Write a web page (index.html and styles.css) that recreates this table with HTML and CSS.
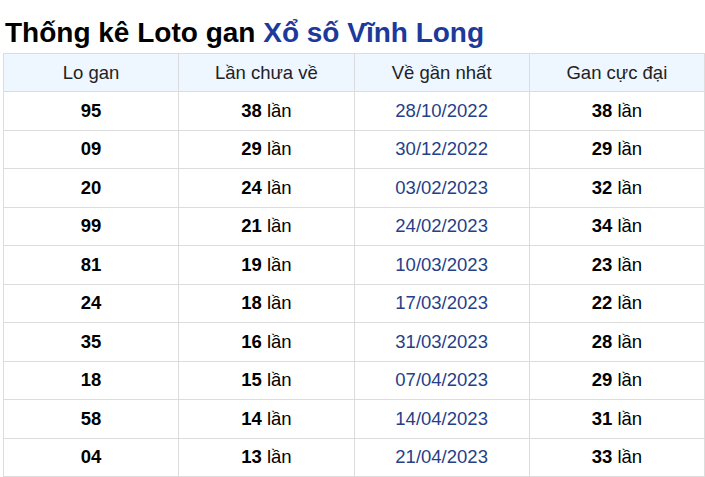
FILE: index.html
```html
<!DOCTYPE html>
<html lang="vi">
<head>
<meta charset="utf-8">
<link rel="stylesheet" href="styles.css">
</head>
<body>
<div class="wrap">
  <h2 class="title">Thống kê Loto gan <span class="hl">Xổ số Vĩnh Long</span></h2>
  <table class="gan">
    <thead>
      <tr><th>Lo gan</th><th>Lần chưa về</th><th>Về gần nhất</th><th>Gan cực đại</th></tr>
    </thead>
    <tbody>
      <tr><td><b>95</b></td><td><b>38</b> lần</td><td class="date">28/10/2022</td><td><b>38</b> lần</td></tr>
      <tr><td><b>09</b></td><td><b>29</b> lần</td><td class="date">30/12/2022</td><td><b>29</b> lần</td></tr>
      <tr><td><b>20</b></td><td><b>24</b> lần</td><td class="date">03/02/2023</td><td><b>32</b> lần</td></tr>
      <tr><td><b>99</b></td><td><b>21</b> lần</td><td class="date">24/02/2023</td><td><b>34</b> lần</td></tr>
      <tr><td><b>81</b></td><td><b>19</b> lần</td><td class="date">10/03/2023</td><td><b>23</b> lần</td></tr>
      <tr><td><b>24</b></td><td><b>18</b> lần</td><td class="date">17/03/2023</td><td><b>22</b> lần</td></tr>
      <tr><td><b>35</b></td><td><b>16</b> lần</td><td class="date">31/03/2023</td><td><b>28</b> lần</td></tr>
      <tr><td><b>18</b></td><td><b>15</b> lần</td><td class="date">07/04/2023</td><td><b>29</b> lần</td></tr>
      <tr><td><b>58</b></td><td><b>14</b> lần</td><td class="date">14/04/2023</td><td><b>31</b> lần</td></tr>
      <tr><td><b>04</b></td><td><b>13</b> lần</td><td class="date">21/04/2023</td><td><b>33</b> lần</td></tr>
    </tbody>
  </table>
</div>
</body>
</html>
```
FILE: styles.css
```css
html, body {
  margin: 0;
  padding: 0;
  background: #fff;
}
.wrap {
  padding: 0 0 0 3px;
  font-family: "Liberation Sans", Arial, sans-serif;
}
.title {
  margin: 0;
  padding: 16px 0 0 2px;
  height: 37px;
  font-size: 28px;
  line-height: 34px;
  font-weight: bold;
  color: #000;
  white-space: nowrap;
}
.title .hl {
  color: #1c3a9b;
}
.gan {
  width: 702px;
  border-collapse: collapse;
  table-layout: fixed;
  font-size: 18.5px;
  color: #000;
}
.gan th, .gan td {
  border: 1px solid #dcdcdc;
  text-align: center;
  padding: 0;
  height: 37.5px;
}
.gan th {
  background: #eef6ff;
  font-weight: normal;
  color: #222;
  height: 37px;
}
.gan td b {
  font-weight: bold;
}
.gan td.date {
  color: #263f88;
}
```
